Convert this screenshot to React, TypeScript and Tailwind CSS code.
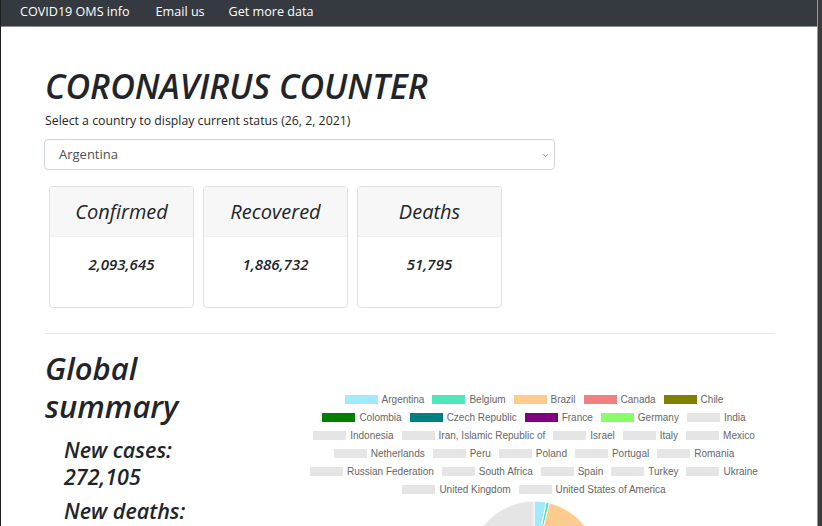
import { ChevronDown } from "lucide-react";

const font = { fontFamily: '"Open Sans", "Noto Sans", sans-serif' };

type LegendItem = { label: string; color: string };

const grey = "#e5e5e5";

const legendRows: LegendItem[][] = [
  [
    { label: "Argentina", color: "#a3e9fd" },
    { label: "Belgium", color: "#4ee6ba" },
    { label: "Brazil", color: "#fecb8f" },
    { label: "Canada", color: "#f08080" },
    { label: "Chile", color: "#808000" },
  ],
  [
    { label: "Colombia", color: "#008000" },
    { label: "Czech Republic", color: "#008080" },
    { label: "France", color: "#800080" },
    { label: "Germany", color: "#88ff66" },
    { label: "India", color: grey },
  ],
  [
    { label: "Indonesia", color: grey },
    { label: "Iran, Islamic Republic of", color: grey },
    { label: "Israel", color: grey },
    { label: "Italy", color: grey },
    { label: "Mexico", color: grey },
  ],
  [
    { label: "Netherlands", color: grey },
    { label: "Peru", color: grey },
    { label: "Poland", color: grey },
    { label: "Portugal", color: grey },
    { label: "Romania", color: grey },
  ],
  [
    { label: "Russian Federation", color: grey },
    { label: "South Africa", color: grey },
    { label: "Spain", color: grey },
    { label: "Turkey", color: grey },
    { label: "Ukraine", color: grey },
  ],
  [
    { label: "United Kingdom", color: grey },
    { label: "United States of America", color: grey },
  ],
];

const stats = [
  { title: "Confirmed", value: "2,093,645" },
  { title: "Recovered", value: "1,886,732" },
  { title: "Deaths", value: "51,795" },
];

function slice(cx: number, cy: number, r: number, a0: number, a1: number) {
  const rad = (a: number) => ((a - 90) * Math.PI) / 180;
  const x0 = cx + r * Math.cos(rad(a0));
  const y0 = cy + r * Math.sin(rad(a0));
  const x1 = cx + r * Math.cos(rad(a1));
  const y1 = cy + r * Math.sin(rad(a1));
  const large = a1 - a0 > 180 ? 1 : 0;
  return `M${cx},${cy} L${x0},${y0} A${r},${r} 0 ${large} 1 ${x1},${y1} Z`;
}

function Pie() {
  const parts = [
    { a0: 0, a1: 11, c: "#a3e9fd" },
    { a0: 11, a1: 14, c: "#4ee6ba" },
    { a0: 14, a1: 80, c: "#fecb8f" },
    { a0: 80, a1: 84, c: "#f08080" },
    { a0: 84, a1: 150, c: grey },
    { a0: 150, a1: 230, c: grey },
    { a0: 230, a1: 300, c: grey },
    { a0: 300, a1: 360, c: grey },
  ];
  return (
    <svg width="132" height="132" viewBox="0 0 132 132">
      {parts.map((p, i) => (
        <path key={i} d={slice(66, 66, 64, p.a0, p.a1)} fill={p.c} stroke="#fff" strokeWidth="1" />
      ))}
    </svg>
  );
}

export default function App() {
  return (
    <div className="flex h-[526px] w-[822px] overflow-hidden bg-white text-[#212529]" style={font}>
      <div className="w-px shrink-0 bg-[#1f1f1f]" />
      <div className="flex min-w-0 flex-1 flex-col">
        <nav className="flex h-[27px] shrink-0 items-center border-b border-[#8d9196] bg-[#343a40] pb-px pl-[19px] text-[12.6px] text-white">
          <span>COVID19 OMS info</span>
          <span className="ml-[26px]">Email us</span>
          <span className="ml-[24px]">Get more data</span>
        </nav>

        <main className="pl-[44px] pr-[42px]">
          <h1 className="mt-[37px] text-[34px] font-semibold italic leading-[44px]">
            CORONAVIRUS COUNTER
          </h1>
          <p className="mt-[4px] text-[12.3px] leading-[18px]">
            Select a country to display current status (26, 2, 2021)
          </p>

          <div className="relative -ml-px mt-[9px] flex h-[31px] w-[511px] items-center rounded-[4px] border border-[#ced4da] pl-[14px] text-[13px] text-[#495057]">
            Argentina
            <ChevronDown className="absolute right-[4px] top-[11px] h-[9px] w-[9px] text-[#6c757d]" strokeWidth={2} />
          </div>

          <div className="ml-[4px] mt-[16px] flex gap-[9px]">
            {stats.map((s) => (
              <div key={s.title} className="flex h-[122px] w-[145px] flex-col overflow-hidden rounded-[4px] border border-[#dfdfdf]">
                <div className="flex h-[50px] items-center justify-center border-b border-[#efefef] bg-[#f7f7f7] text-[20px] italic">
                  {s.title}
                </div>
                <div className="flex flex-1 items-start justify-center pt-[16px] text-[15px] font-semibold italic">
                  {s.value}
                </div>
              </div>
            ))}
          </div>

          <hr className="mt-[25px] border-t border-[#e5e5e5]" />

          <div className="flex">
            <div className="w-[182px] shrink-0">
              <h2 className="mt-[15px] text-[31px] font-semibold italic leading-[38px]">Global summary</h2>
              <div className="ml-[19px] mt-[11px] text-[21.5px] font-semibold italic leading-[27px]">
                <div>New cases:</div>
                <div>272,105</div>
                <div className="mt-[7px]">New deaths:</div>
              </div>
            </div>

            <div className="ml-[66px] flex min-w-0 flex-1 flex-col items-center pt-[56px]" style={{ fontFamily: '"Liberation Sans", Arial, sans-serif' }}>
              {legendRows.map((row, i) => (
                <div key={i} className="flex h-[18px] items-center gap-[8px] text-[10px] text-[#666]">
                  {row.map((it) => (
                    <div key={it.label} className="flex items-center gap-[4px]">
                      <span className="h-[9px] w-[33px]" style={{ backgroundColor: it.color }} />
                      <span>{it.label}</span>
                    </div>
                  ))}
                </div>
              ))}
              <div className="mt-[1px]">
                <Pie />
              </div>
            </div>
          </div>
        </main>
      </div>
      <div className="w-px shrink-0 bg-[#9a9a9a]" />
      <div className="w-[4px] shrink-0 bg-[#3c3c3c]" />
    </div>
  );
}
